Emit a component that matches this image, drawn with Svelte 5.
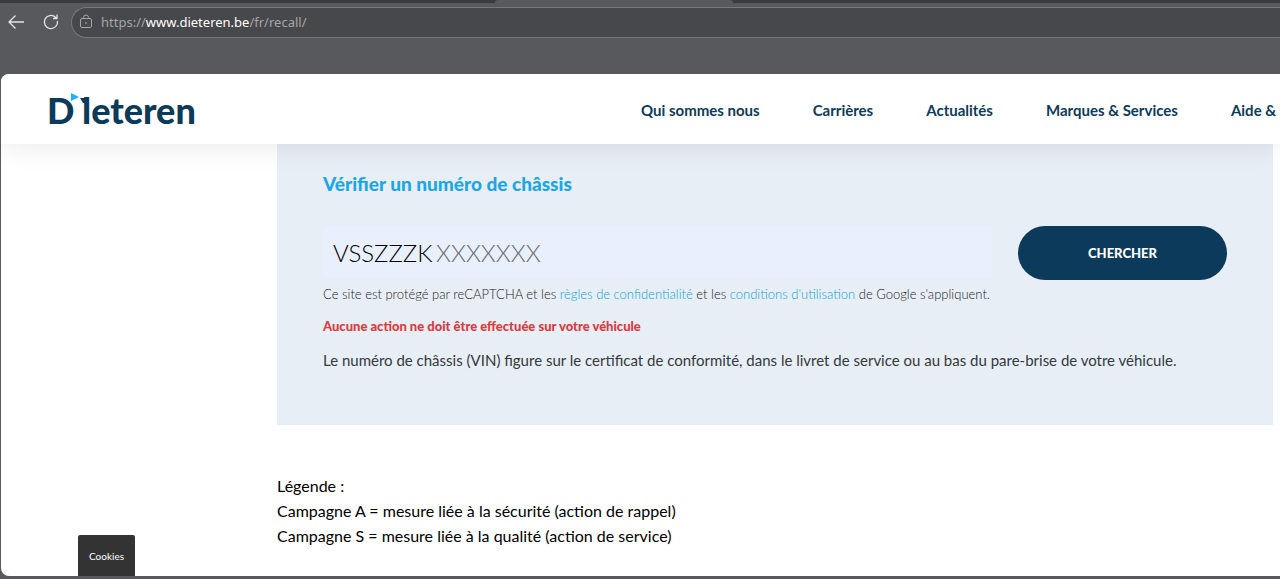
<script>
  let vin = 'VSSZZZK';
  let mask = 'XXXXXXX';

  const menu = [
    'Qui sommes nous',
    'Carrières',
    'Actualités',
    'Marques & Services',
    'Aide & Contact'
  ];

  const legend = [
    'Campagne A = mesure liée à la sécurité (action de rappel)',
    'Campagne S = mesure liée à la qualité (action de service)'
  ];
</script>

<div class="browser">
  <div class="tabs">
    <div class="tab"></div>
  </div>

  <div class="toolbar">
    <button class="tool" aria-label="Retour">
      <svg width="18" height="18" viewBox="0 0 18 18">
        <path d="M17 9H2M8.500 2.500L2 9l6.500 6.500" />
      </svg>
    </button>
    <button class="tool" aria-label="Actualiser">
      <svg width="18" height="18" viewBox="0 0 18 18">
        <path d="M15.500 8A6.600 6.600 0 1 1 13.500 4.200L14.500 5.200M15 1.500V5.500H11" />
      </svg>
    </button>
    <div class="address">
      <svg class="lock" width="14" height="16" viewBox="0 0 14 16">
        <rect x="1.500" y="4.500" width="11" height="9" rx="1.500" />
        <path d="M4.500 4.500V3.500a2.500 2.500 0 0 1 5 0v1" />
        <circle cx="7" cy="9" r="0.500" />
      </svg>
      <span class="url">https://<b>www.dieteren.be</b>/fr/recall/</span>
    </div>
  </div>

  <div class="page">
    <header>
      <a class="logo" href="/fr" aria-label="D'Ieteren">
        <svg width="156" height="52" viewBox="-4 0 156 52">
          <text x="-2" y="40">D</text>
          <text x="33" y="40">leteren</text>
          <path class="stem" d="M31 14h6v5h-3z" />
          <path class="flag" d="M22 9l8 4-8 4z" />
        </svg>
      </a>
      <nav>
        {#each menu as item}
          <a href="/fr">{item}</a>
        {/each}
      </nav>
    </header>

    <main>
      <section class="panel">
        <h2><label for="vin">Vérifier un numéro de châssis</label></h2>
        <form on:submit|preventDefault>
          <div class="field">
            <input id="vin" type="text" bind:value={vin} />
            <span class="mask">{mask}</span>
          </div>
          <button class="search">CHERCHER</button>
        </form>
        <p class="captcha">
          Ce site est protégé par reCAPTCHA et les <a href="/privacy">règles de confidentialité</a> et les
          <a href="/terms">conditions d'utilisation</a> de Google s'appliquent.
        </p>
        <p class="result">Aucune action ne doit être effectuée sur votre véhicule</p>
        <p class="help">
          Le numéro de châssis (VIN) figure sur le certificat de conformité, dans le livret de service ou au bas du pare-brise de votre véhicule.
        </p>
      </section>

      <div class="legend">
        <p>Légende :</p>
        {#each legend as line}
          <p>{line}</p>
        {/each}
      </div>
    </main>

    <button class="cookies">Cookies</button>
  </div>
</div>

<style>
  :global(body) {
    margin: 0;
    overflow: hidden;
  }

  .browser {
    --navy: #0c3a5b;
    --blue: #1aa6e8;
    display: flex;
    flex-direction: column;
    height: 100vh;
    box-sizing: border-box;
    padding: 0 0 3px 1px;
    background: #58595d;
    font-family: Lato, "Liberation Sans", sans-serif;
    overflow: hidden;
  }

  .tabs {
    height: 3px;
    margin-left: -1px;
    padding-left: 495px;
    background: #3a3b3e;
  }
  .tab {
    width: 238px;
    height: 3px;
    background: #58595d;
    border-radius: 3px 3px 0 0;
  }

  .toolbar {
    display: flex;
    align-items: center;
    height: 38px;
    padding: 0 0 0 6px;
    margin-bottom: 33px;
    gap: 17px;
  }
  .tool {
    display: flex;
    padding: 0;
    border: 0;
    background: none;
  }
  .tool svg {
    fill: none;
    stroke: #e4e4e5;
    stroke-width: 1.3;
  }
  .address {
    display: flex;
    flex: 1;
    align-items: center;
    gap: 8px;
    height: 29px;
    margin-left: -6px;
    padding-left: 7px;
    border: 1px solid #77787b;
    border-right: 0;
    border-radius: 16px 0 0 16px;
    background: #47484b;
  }
  .lock {
    fill: none;
    stroke: #a5a5a7;
  }
  .url {
    font: 13px "Noto Sans", sans-serif;
    color: #a5a5a7;
  }
  .url b {
    font-weight: 400;
    color: #fff;
  }

  .page {
    position: relative;
    flex: 1;
    min-height: 0;
    background: #fff;
    border-radius: 8px 0 0 8px;
    overflow: hidden;
  }

  header {
    position: relative;
    z-index: 1;
    display: flex;
    align-items: center;
    height: 70px;
    box-sizing: border-box;
    padding: 2px 0 0 44px;
    background: #fff;
    box-shadow: 0 0 30px rgba(0, 0, 0, 0.1);
  }
  .logo {
    display: flex;
    flex: none;
  }
  .logo text {
    font-size: 36px;
    font-weight: 900;
    fill: var(--navy);
  }
  .stem {
    fill: var(--navy);
  }
  .flag {
    fill: #1fb0f5;
  }
  nav {
    display: flex;
    flex: none;
    gap: 53px;
    margin-left: 440px;
    white-space: nowrap;
  }
  nav a {
    color: var(--navy);
    font-size: 15px;
    font-weight: 700;
    text-decoration: none;
  }

  main {
    padding: 0 7px 0 276px;
  }
  .panel {
    box-sizing: border-box;
    padding: 28px 46px 53px;
    background: #e7eef5;
  }
  h2 {
    margin: 0 0 30px;
    font-size: 19px;
    font-weight: 900;
    line-height: 24px;
    color: var(--blue);
  }
  form {
    display: flex;
    gap: 26px;
  }
  .field {
    display: flex;
    flex: 1;
    align-items: center;
    height: 52px;
    padding-left: 10px;
    background: #e8f0fe;
    font-size: 24px;
    font-weight: 300;
  }
  .field input {
    width: 103px;
    padding: 0;
    border: 0;
    outline: 0;
    background: none;
    color: #000;
    font: inherit;
  }
  .mask {
    color: #6c6d70;
  }
  .search {
    width: 209px;
    height: 54px;
    border: 0;
    border-radius: 27px;
    background: var(--navy);
    color: #fff;
    font: 900 13px Lato, "Liberation Sans", sans-serif;
  }
  .captcha {
    margin: 4px 0 12px;
    font-size: 13px;
    font-weight: 300;
    line-height: 20px;
    color: #1d2226;
  }
  .captcha a {
    color: #12a2d4;
    text-decoration: none;
  }
  .result {
    margin: 0 0 12px;
    font-size: 13px;
    font-weight: 900;
    line-height: 20px;
    color: #dc3a3f;
  }
  .help {
    margin: 0;
    font-size: 15px;
    line-height: 24px;
    color: #34393d;
  }

  .legend {
    padding-top: 48px;
    font-size: 16px;
    line-height: 25px;
    color: #000;
  }
  .legend p {
    margin: 0;
  }

  .cookies {
    position: absolute;
    bottom: 0;
    left: 77px;
    width: 57px;
    height: 41px;
    padding: 0;
    border: 0;
    border-radius: 2px 2px 0 0;
    background: #333;
    color: #fff;
    font: 10px Lato, "Liberation Sans", sans-serif;
  }
</style>
